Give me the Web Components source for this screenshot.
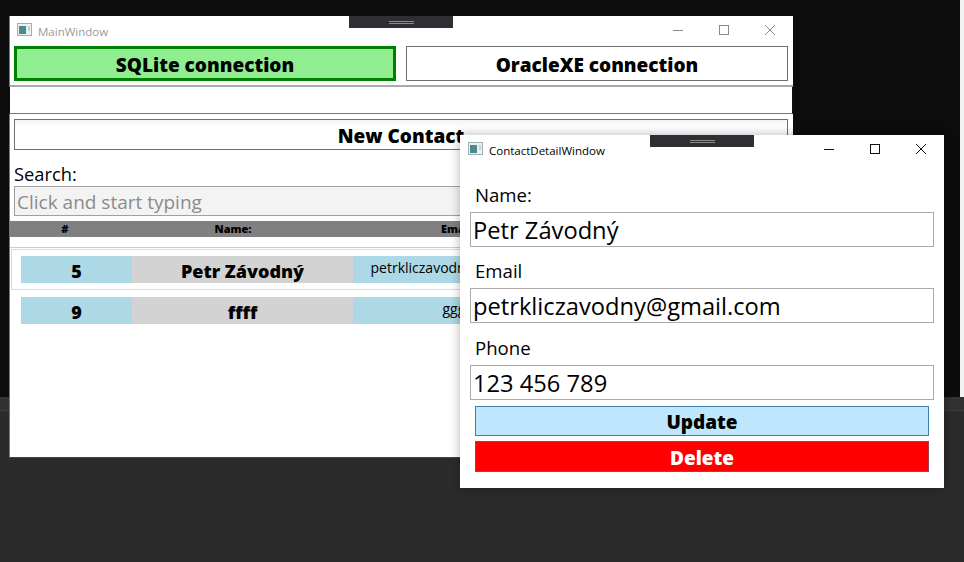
<!DOCTYPE html>
<html>
<head>
<meta charset="utf-8">
<title>Contacts</title>
<style>
  html, body { margin: 0; height: 100%; }
  body { background: #2b2b2c; overflow: hidden; font-family: "Open Sans", "Noto Sans", sans-serif; }
  .top { display: flex; height: 397px; background: #0c0c0c; }
  .top div { margin-left: auto; width: 4px; background: #f2f2f2; }
  .band { height: 13px; background: #323234; border-bottom: 1px solid #3d3d3f; }
</style>
</head>
<body>
<div class="top"><div></div></div>
<div class="band"></div>

<wpf-window title="MainWindow" handle="339" inactive style="left:9px;top:16px;width:784px;height:442px">
  <div style="display:grid;grid-template-columns:1fr 1fr;gap:10px;padding:0 5px 0 4px">
    <wpf-button active style="height:35px">SQLite connection</wpf-button>
    <wpf-button style="height:35px">OracleXE connection</wpf-button>
  </div>
  <div style="height:2px;background:#aaa;margin-top:4px"></div>
  <div style="height:27px;box-sizing:border-box;margin-left:-1px;border:1px solid #111;border-top:0;border-bottom:1px solid #777"></div>
  <div style="padding:5px 5px 0 4px">
    <wpf-button gradient style="height:31px">New Contact</wpf-button>
  </div>
  <search-box></search-box>
  <contact-header></contact-header>
  <div style="height:1px;background:#ccc;margin:10px 0 1px"></div>
  <contact-row selected num="5" name="Petr Závodný" email="petrkliczavodny@gmail.com"></contact-row>
  <contact-row num="9" name="ffff" email="ggggg"></contact-row>
</wpf-window>

<wpf-window title="ContactDetailWindow" handle="190" style="left:460px;top:135px;width:484px;height:353px">
  <detail-field label="Name:" value="Petr Závodný" style="margin-top:6px"></detail-field>
  <detail-field label="Email" value="petrkliczavodny@gmail.com"></detail-field>
  <detail-field label="Phone" value="123 456 789" style="margin-top:1px"></detail-field>
  <div style="display:flex;flex-direction:column;gap:5px;padding:6px 15px 0">
    <wpf-button kind="update" style="height:30px">Update</wpf-button>
    <wpf-button kind="delete" style="height:31px">Delete</wpf-button>
  </div>
</wpf-window>

<script>
class WpfWindow extends HTMLElement {
  constructor() {
    super();
    const shadow = this.attachShadow({mode: 'open'});
    const inactive = this.hasAttribute('inactive');
    const stroke = inactive ? '#8c8c8c' : '#111';
    shadow.innerHTML = `
      <style>
        :host {
          position: absolute;
          display: flex;
          flex-direction: column;
          box-sizing: border-box;
          background: #fff;
          color: #000;
          box-shadow: 0 0 10px rgba(0,0,0,.3);
        }
        :host([inactive]) { border-left: 1px solid #777; border-bottom: 1px solid #444; box-shadow: none; }
        .bar { position: relative; display: flex; align-items: center; height: 30px; flex: none; font-size: 11.5px; }
        :host([inactive]) .bar { color: #999; }
        .icon { margin: 0 6px 3px 8px; width: 15px; height: 13px; }
        :host([inactive]) .icon { margin-left: 7px; }
        .title { white-space: nowrap; }
        .controls { margin: 0 0 2px auto; display: flex; align-items: center; }
        .controls svg { width: 46px; height: 12px; display: block; }
        .handle {
          position: absolute; left: ${this.getAttribute('handle')}px; top: 0; width: 104px; height: 12px;
          background: #2f2f33;
          display: flex; flex-direction: column; align-items: center; justify-content: center; gap: 1px;
        }
        .handle i { display: block; width: 25px; height: 1px; background: #8a8a8a; }
      </style>
      <div class="bar">
        <svg class="icon" viewBox="0 0 15 13">
          <rect x=".5" y=".5" width="14" height="12" fill="#eef1f2" stroke="#9db0b5"/>
          <rect x="2" y="3" width="7" height="8" fill="#4f8a8b"/>
          <rect x="11" y="3" width="2" height="5" fill="#c5d3d6"/>
        </svg>
        <span class="title">${this.getAttribute('title')}</span>
        <div class="controls">
          <svg viewBox="0 0 46 12"><path d="M18 6.5h10" stroke="${stroke}" fill="none"/></svg>
          <svg viewBox="0 0 46 12"><rect x="18.5" y="1.5" width="9" height="9" stroke="${stroke}" fill="none"/></svg>
          <svg viewBox="0 0 46 12"><path d="M18 1l10 10M28 1L18 11" stroke="${stroke}" fill="none"/></svg>
        </div>
        <div class="handle"><i></i><i></i></div>
      </div>
      <slot></slot>
    `;
    this.removeAttribute('title');
  }
}
customElements.define('wpf-window', WpfWindow);

class WpfButton extends HTMLElement {
  constructor() {
    super();
    const shadow = this.attachShadow({mode: 'open'});
    shadow.innerHTML = `
      <style>
        :host {
          display: flex;
          align-items: center;
          justify-content: center;
          box-sizing: border-box;
          padding-top: 2px;
          background: #fff;
          border: 1px solid #707070;
          font-size: 19px;
          font-weight: 800;
          white-space: nowrap;
          color: #000;
        }
        :host([active]) { background: #90ee90; border: 3px solid #008000; }
        :host([gradient]) { background: linear-gradient(#f3f3f3, #fff 25%); }
        :host([kind=update]) { background: #bee6fd; border-color: #3c7fb1; padding-top: 1px; }
        :host([kind=delete]) { background: #f00; color: #fff; border-color: #a04050; }
      </style>
      <slot></slot>
    `;
  }
}
customElements.define('wpf-button', WpfButton);

class SearchBox extends HTMLElement {
  constructor() {
    super();
    const shadow = this.attachShadow({mode: 'open'});
    shadow.innerHTML = `
      <style>
        :host { display: block; padding: 11px 5px 0 4px; }
        .label { box-sizing: border-box; padding-top: 1px; font-size: 18.3px; line-height: 24px; height: 25px; }
        .input {
          box-sizing: border-box; height: 30px; padding-left: 2px; background: #f3f3f3;
          border: 1px solid #a0a0a0; color: #8b8b8b; font-size: 19px; line-height: 30px;
        }
      </style>
      <div class="label">Search:</div>
      <div class="input">Click and start typing</div>
    `;
  }
}
customElements.define('search-box', SearchBox);

class ContactHeader extends HTMLElement {
  constructor() {
    super();
    const shadow = this.attachShadow({mode: 'open'});
    shadow.innerHTML = `
      <style>
        :host { display: block; margin-top: 5px; height: 16px; background: #808080; font-size: 11px; font-weight: 800; line-height: 16px; text-align: center; }
        .cols { display: grid; grid-template-columns: 110px 226px 224px 1fr; }
      </style>
      <div class="cols"><span>#</span><span>Name:</span><span>Email:</span><span>Phone:</span></div>
    `;
  }
}
customElements.define('contact-header', ContactHeader);

class ContactRow extends HTMLElement {
  constructor() {
    super();
    const shadow = this.attachShadow({mode: 'open'});
    shadow.innerHTML = `
      <style>
        :host { display: block; box-sizing: border-box; height: 41px; margin: 0 3px 0 1px; padding: 6px 8px 0 9px; border: 1px solid transparent; }
        :host([selected]) { border-color: #dadada; }
        .cols { display: grid; grid-template-columns: 111px 221px 217px 1fr; grid-template-rows: 27px; text-align: center; }
        .num, .name { font-size: 18px; font-weight: 800; line-height: 30px; }
        .num, .email { background: #add8e6; }
        .name { background: #d3d3d3; }
        .email { font-size: 14px; line-height: 24px; }
      </style>
      <div class="cols">
        <span class="num">${this.getAttribute('num')}</span>
        <span class="name">${this.getAttribute('name')}</span>
        <span class="email">${this.getAttribute('email')}</span>
        <span class="num"></span>
      </div>
    `;
  }
}
customElements.define('contact-row', ContactRow);

class DetailField extends HTMLElement {
  constructor() {
    super();
    const shadow = this.attachShadow({mode: 'open'});
    shadow.innerHTML = `
      <style>
        :host { display: block; padding: 0 10px; }
        .label { font-size: 18.6px; line-height: 24px; height: 41px; padding: 12px 0 0 5px; box-sizing: border-box; }
        .value {
          box-sizing: border-box; height: 35px; padding-left: 2px; border: 1px solid #aaa;
          font-size: 23.7px; line-height: 35px; white-space: nowrap;
        }
      </style>
      <div class="label">${this.getAttribute('label')}</div>
      <div class="value">${this.getAttribute('value')}</div>
    `;
  }
}
customElements.define('detail-field', DetailField);
</script>
</body>
</html>
